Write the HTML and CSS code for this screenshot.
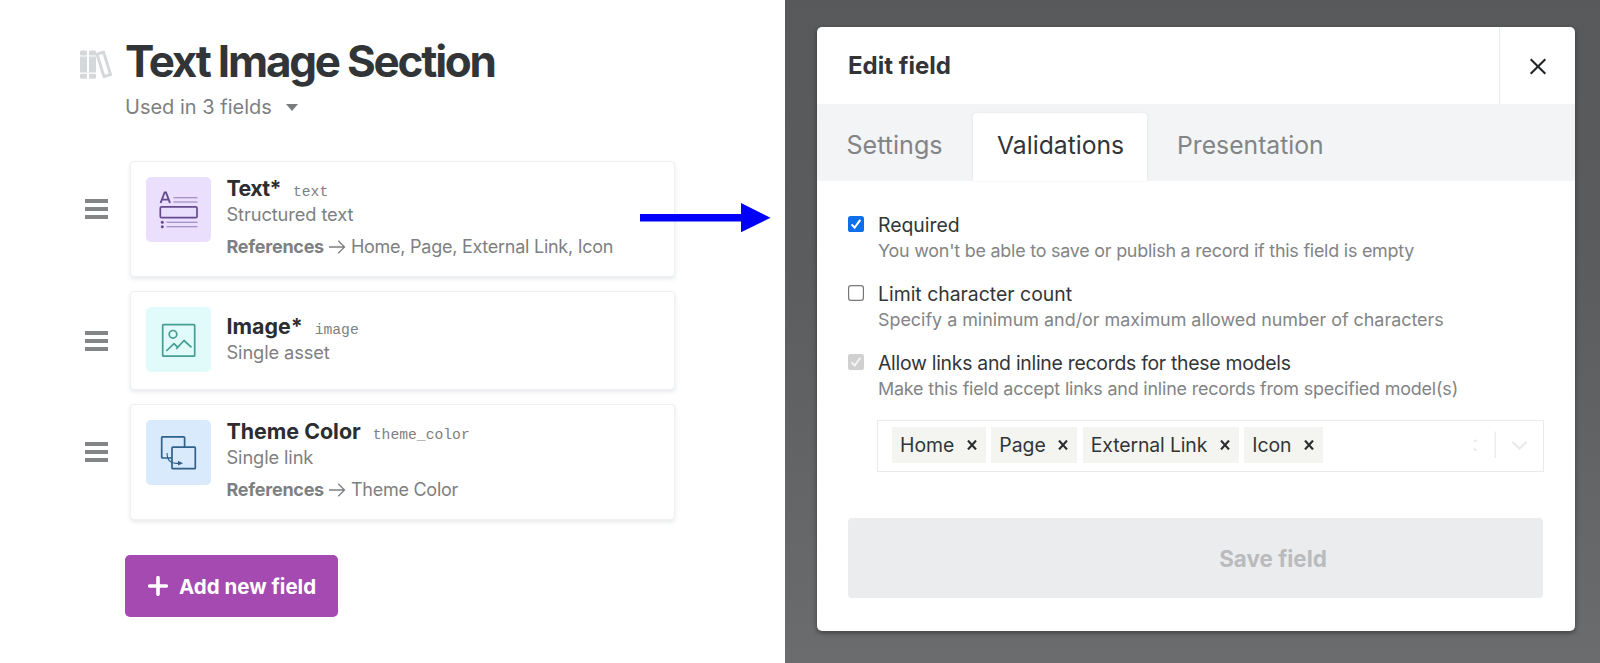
FILE: index.html
```html
<!DOCTYPE html>
<html lang="en">
<head>
  <meta charset="UTF-8">
  <meta name="viewport" content="width=device-width, initial-scale=1.0">
  <title>Text Image Section</title>
  <link rel="stylesheet" href="styles.css">
</head>
<body>
  <main class="model">
    <header class="model-header">
      <svg class="books" width="33" height="30" viewBox="0 0 33 30">
        <g fill="#d5d8da">
          <rect x="0" y="0.5" width="7" height="5" rx="1.2"/>
          <rect x="0" y="6.5" width="7" height="16"/>
          <rect x="0" y="23.7" width="7" height="5" rx="1.2"/>
          <rect x="9" y="0.5" width="7" height="5" rx="1.2"/>
          <rect x="9" y="6.5" width="7" height="16"/>
          <rect x="9" y="23.7" width="7" height="5" rx="1.2"/>
        </g>
        <path d="M17 4.2 L23.6 2.2 L30.6 24.7 L24 26.7 Z" fill="none" stroke="#d5d8da" stroke-width="2.9" stroke-linejoin="round"/>
      </svg>
      <div>
        <h1>Text Image Section</h1>
        <button class="usage">Used in 3 fields <span class="caret"></span></button>
      </div>
    </header>

    <div class="fields">
      <div class="field">
        <span class="handle"></span>
        <div class="card tall">
          <svg class="field-icon" width="65" height="65" viewBox="0 0 65 65">
            <rect width="65" height="65" rx="5" fill="#eadffc"/>
            <path d="M14.6 26 L18.6 15.5 H20 L24 26 M16 22.6 H22.6" fill="none" stroke="#664a8d" stroke-width="1.9"/>
            <path d="M27.5 20.7 H51.5 M27.5 25 H51.5 M20.5 45.3 H51.5 M20.5 49.8 H51.5" stroke="#927bb4" stroke-width="1.1"/>
            <rect x="14.3" y="29.8" width="36.7" height="10.8" rx="1.2" fill="none" stroke="#664a8d" stroke-width="1.7"/>
            <circle cx="16.3" cy="45.3" r="1.5" fill="#664a8d"/>
            <circle cx="16.3" cy="49.8" r="1.5" fill="#664a8d"/>
          </svg>
          <div class="info">
            <div class="name"><b class="tight">Text*</b><code>text</code></div>
            <div class="type">Structured text</div>
            <div class="refs"><b>References</b><svg class="to" width="17" height="14" viewBox="0 0 17 14"><path d="M0 7 H15.5 M9.3 0.8 L15.5 7 L9.3 13.2"/></svg><span>Home, Page, External Link, Icon</span></div>
          </div>
        </div>
      </div>

      <div class="field">
        <span class="handle"></span>
        <div class="card short">
          <svg class="field-icon" width="65" height="65" viewBox="0 0 65 65">
            <rect width="65" height="65" rx="5" fill="#e0fbfa"/>
            <g fill="none" stroke="#489d93" stroke-width="1.7" stroke-linejoin="round">
              <rect x="16.7" y="17.7" width="32" height="31.5" rx="0.8"/>
              <circle cx="27" cy="27.3" r="3.8"/>
              <path d="M20.3 44 L28 36.7 L31.3 39.8 M30.3 41.8 L38 33.5 L45.5 40.4"/>
            </g>
          </svg>
          <div class="info">
            <div class="name"><b>Image*</b><code>image</code></div>
            <div class="type">Single asset</div>
          </div>
        </div>
      </div>

      <div class="field">
        <span class="handle"></span>
        <div class="card tall">
          <svg class="field-icon" width="65" height="65" viewBox="0 0 65 65">
            <rect width="65" height="65" rx="5" fill="#d9eafc"/>
            <g fill="none" stroke="#2f6189" stroke-width="1.7" stroke-linejoin="round">
              <path d="M26 38 H16.5 Q15.7 38 15.7 37.2 V17.6 Q15.7 16.8 16.5 16.8 H37.6 Q38.6 16.8 38.6 17.6 V27"/>
              <rect x="26" y="27.2" width="23.3" height="21.5" rx="0.8"/>
              <path d="M21 33 C21 40 24 43.4 30 43.4 H33" stroke-width="1.1"/>
            </g>
            <path d="M32 40.8 L37 43.2 L32 45.6 Z" fill="#2f6189"/>
          </svg>
          <div class="info">
            <div class="name"><b>Theme Color</b><code>theme_color</code></div>
            <div class="type">Single link</div>
            <div class="refs"><b>References</b><svg class="to" width="17" height="14" viewBox="0 0 17 14"><path d="M0 7 H15.5 M9.3 0.8 L15.5 7 L9.3 13.2"/></svg><span>Theme Color</span></div>
          </div>
        </div>
      </div>
    </div>

    <button class="add">
      <svg width="20" height="20" viewBox="0 0 20 20"><path d="M10 1.7 V18.3 M1.7 10 H18.3" stroke="#fff" stroke-width="3.6" stroke-linecap="round"/></svg>
      Add new field
    </button>

    <svg class="pointer" width="131" height="30" viewBox="0 0 131 30">
      <path d="M0 11 H101 V0 L130.5 14.7 L101 29.3 V18.5 H0 Z" fill="#0000fb"/>
    </svg>
  </main>

  <aside class="overlay">
    <section class="modal">
      <header class="modal-header">
        <h2>Edit field</h2>
        <button class="close">
          <svg width="18" height="17" viewBox="0 0 18 17"><path d="M1.7 1.2 L16.3 15.8 M16.3 1.2 L1.7 15.8" stroke="#222426" stroke-width="2.1"/></svg>
        </button>
      </header>
      <nav class="tabs">
        <a class="tab">Settings</a>
        <a class="tab active">Validations</a>
        <a class="tab">Presentation</a>
      </nav>
      <div class="content">
        <div class="option">
          <svg class="check" width="16" height="16" viewBox="0 0 16 16"><rect width="16" height="16" rx="2.6" fill="#0d70ea"/><path d="M3.6 8.4 L6.6 11.6 L12.3 3.8" fill="none" stroke="#fff" stroke-width="2"/></svg>
          <div>
            <div class="label">Required</div>
            <div class="hint hint-empty">You won't be able to save or publish a record if this field is empty</div>
          </div>
        </div>
        <div class="option">
          <svg class="check" width="16" height="16" viewBox="0 0 16 16"><rect x="0.6" y="0.6" width="14.8" height="14.8" rx="2.4" fill="#fff" stroke="#77787a" stroke-width="1.2"/></svg>
          <div>
            <div class="label">Limit character count</div>
            <div class="hint">Specify a minimum and/or maximum allowed number of characters</div>
          </div>
        </div>
        <div class="option">
          <svg class="check" width="16" height="16" viewBox="0 0 16 16"><rect width="16" height="16" rx="2.6" fill="#d0d0d1"/><path d="M3.6 8.4 L6.6 11.6 L12.3 3.8" fill="none" stroke="#f6f6f6" stroke-width="1.8"/></svg>
          <div>
            <div class="label label-long">Allow links and inline records for these models</div>
            <div class="hint hint-models">Make this field accept links and inline records from specified model(s)</div>
          </div>
        </div>

        <div class="select">
          <span class="tag">Home <svg width="10" height="10" viewBox="0 0 10 10"><path d="M1 0.6 L9 9.4 M9 0.6 L1 9.4"/></svg></span>
          <span class="tag">Page <svg width="10" height="10" viewBox="0 0 10 10"><path d="M1 0.6 L9 9.4 M9 0.6 L1 9.4"/></svg></span>
          <span class="tag tag-wide">External Link <svg width="10" height="10" viewBox="0 0 10 10"><path d="M1 0.6 L9 9.4 M9 0.6 L1 9.4"/></svg></span>
          <span class="tag">Icon <svg width="10" height="10" viewBox="0 0 10 10"><path d="M1 0.6 L9 9.4 M9 0.6 L1 9.4"/></svg></span>
          <svg class="controls" width="56" height="28" viewBox="0 0 56 28">
            <path d="M1 10.8 L3.5 9 M1 17.8 L3.5 19.8" stroke="#e9e9ea" stroke-width="1.8"/>
            <path d="M22.3 0.5 V27" stroke="#e9e9ea" stroke-width="1.2"/>
            <path d="M39.3 11 L46.5 17.6 L53.7 11" fill="none" stroke="#e9e9ea" stroke-width="2"/>
          </svg>
        </div>

        <button class="save">Save field</button>
      </div>
    </section>
  </aside>
</body>
</html>
```
FILE: styles.css
```css
* {
  box-sizing: border-box;
}
body {
  display: flex;
  height: 663px;
  margin: 0;
  overflow: hidden;
  font-family: Inter, Roboto, sans-serif;
  background: #fff;
  color: #323538;
}
h1, h2 {
  margin: 0;
}
button {
  border: none;
  background: none;
  padding: 0;
  font-family: inherit;
}

/* model page */
.model {
  position: relative;
  width: 785px;
  padding: 35px 0 0 80px;
}
.model-header {
  display: flex;
  gap: 12px;
}
.books {
  margin-top: 15px;
}
h1 {
  font-size: 44px;
  line-height: 53px;
  letter-spacing: -2.22px;
}
.usage {
  display: flex;
  align-items: center;
  margin-top: 7px;
  font-size: 20px;
  line-height: 24px;
  color: #7e7f81;
}
.caret {
  margin: 1px 0 0 14px;
  border: 6.5px solid transparent;
  border-top: 7px solid #7a7b7d;
  border-bottom: none;
}
.fields {
  display: flex;
  flex-direction: column;
  gap: 14px;
  margin-top: 42px;
}
.field {
  display: flex;
  align-items: center;
  gap: 22px;
  padding-left: 5px;
}
.handle {
  width: 23px;
  height: 20px;
  border-top: 4px solid #848587;
  border-bottom: 4px solid #848587;
  background: linear-gradient(#848587, #848587) center / 23px 4px no-repeat;
}
.field:not(:nth-child(2)) .handle {
  margin-bottom: 20px;
}
.card {
  display: flex;
  gap: 16px;
  width: 545px;
  padding: 15px 15px 15px 14.5px;
  border: 1px solid #eef0f3;
  border-radius: 4px;
  background: #fff;
  box-shadow: 0 2px 4px rgba(60, 75, 100, 0.13);
}
.tall {
  height: 116px;
}
.short {
  height: 99px;
}
.short .info {
  margin-top: 6px;
}
.info {
  margin-top: -2px;
  color: #7e7f81;
}
.name {
  display: flex;
  align-items: baseline;
  gap: 12px;
  height: 27px;
  font-size: 21.4px;
  line-height: 27px;
}
.name b {
  color: #2b2d30;
}
.tight {
  letter-spacing: -0.6px;
}
.name code {
  font-family: "Liberation Mono", monospace;
  font-size: 14.7px;
  line-height: 1;
}
.type {
  font-size: 18.3px;
  line-height: 24px;
  letter-spacing: -0.12px;
}
.refs {
  display: flex;
  align-items: center;
  margin-top: 9px;
  font-size: 18px;
  line-height: 24px;
  letter-spacing: -0.26px;
}
.to {
  margin: 0 5px;
  fill: none;
  stroke: #7e7f81;
  stroke-width: 1.3;
}
.add {
  display: flex;
  align-items: center;
  gap: 11px;
  width: 213px;
  height: 62px;
  margin: 35px 0 0 45px;
  padding-left: 23px;
  border-radius: 5px;
  background: #a44ab1;
  color: #fff;
  font-size: 20.5px;
  font-weight: 700;
}
/* arrow drawn over the first card */
.pointer {
  position: absolute;
  left: 640px;
  top: 203px;
}

/* edit dialog */
.overlay {
  width: 815px;
  padding: 27px 25px 32px 31.5px;
  background: linear-gradient(#58595b, #5b5c5e 40%, #6b6c6e);
}
.modal {
  height: 604px;
  border-radius: 5px;
  overflow: hidden;
  background: #fff;
  box-shadow: 0 2px 5px rgba(0, 0, 0, 0.4);
}
.modal-header {
  display: flex;
  justify-content: space-between;
  height: 77px;
  padding-left: 31.5px;
}
h2 {
  font-size: 24px;
  line-height: 78px;
}
.close {
  display: flex;
  align-items: center;
  justify-content: center;
  width: 76px;
  padding-top: 2px;
  border-left: 1px solid #e8eaec;
}
.tabs {
  display: flex;
  align-items: flex-end;
  height: 77px;
  background: #f2f4f6;
  color: #838486;
}
.tab {
  height: 68px;
  padding-left: 30px;
  font-size: 24.7px;
  line-height: 64px;
}
.tab:first-child {
  font-size: 25.1px;
}
.active {
  width: 174px;
  margin-left: 30.5px;
  padding-left: 24px;
  border-radius: 4px 4px 0 0;
  background: #fff;
  color: #323538;
  box-shadow: 0 0 3px rgba(0, 0, 0, 0.08);
}
.content {
  padding: 31px 31.5px 0;
}
.option {
  display: flex;
  gap: 14px;
  height: 52px;
  margin-bottom: 17.2px;
}
.check {
  margin-top: 4px;
}
.label {
  font-size: 19.4px;
  line-height: 26px;
}
.label-long {
  letter-spacing: -0.27px;
}
.hint {
  font-size: 17.9px;
  line-height: 26px;
  color: #838486;
}
.hint-empty {
  letter-spacing: -0.22px;
}
.hint-models {
  letter-spacing: -0.17px;
}
.select {
  display: flex;
  align-items: center;
  gap: 5.5px;
  height: 52px;
  margin-left: 29px;
  padding: 0 14px 1px 14px;
  border: 1px solid #e9eaea;
}
.tag {
  display: flex;
  align-items: center;
  justify-content: space-between;
  gap: 12.5px;
  height: 36px;
  padding: 0 9px 0 8px;
  background: #f4f5f0;
  font-size: 19.4px;
}
.tag-wide {
  letter-spacing: -0.12px;
}
.tag svg {
  stroke: #2b2d30;
  stroke-width: 2.2;
}
.controls {
  margin-left: auto;
}
.save {
  display: block;
  width: 695px;
  height: 80px;
  margin-top: 46.5px;
  padding: 0 0 0 155px;
  border-radius: 4px;
  background: #ebecee;
  color: #b9bbbd;
  font-size: 22.4px;
  font-weight: 700;
}
```
